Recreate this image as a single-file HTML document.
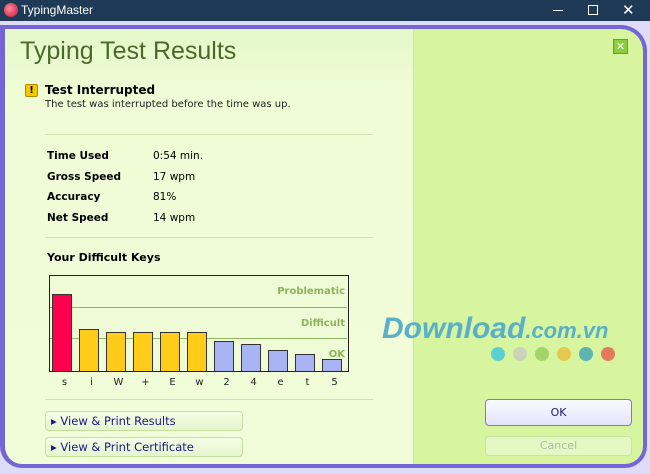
<!DOCTYPE html>
<html><head><meta charset="utf-8"><style>
*{margin:0;padding:0;box-sizing:border-box}
body{width:650px;height:474px;background:#dedcf6;position:relative;overflow:hidden;font-family:Tahoma,"DejaVu Sans","Liberation Sans",sans-serif}
.tb{position:absolute;left:0;top:0;width:650px;height:21px;background:#1f3a56;color:#fff;font-size:12px}
.frame{position:absolute;left:0;top:25px;width:647px;height:443px;border:4px solid #7566d6;border-left-width:5px;border-radius:0 26px 22px 22px;background:#d6f59e;overflow:hidden}
.left{position:absolute;left:0;top:0;width:409px;height:100%;background:linear-gradient(#e4f8c8,#effcd6 60px,#f0fdd8);border-right:1px solid #c6e89a}
.abs{position:absolute}
.b{font-weight:bold}
.hr{position:absolute;height:1px;background:#cfe3b0}
.bar{position:absolute;bottom:0;width:20px;border:1.5px solid #333;border-bottom:none}
.btn{position:absolute;border:1px solid #c5df9d;border-radius:4px;background:linear-gradient(#f4fde6,#e6f6ce);color:#1a1a8a;font-size:11.5px;padding-left:5px;line-height:18px}
</style></head><body>
<div class="tb">
<div class="abs" style="left:4px;top:3px;width:14px;height:14px;border-radius:50%;background:radial-gradient(circle at 40% 40%,#ff8a9a,#c8103a)"></div>
<div class="abs" style="left:21px;top:3px;font-family:'Liberation Sans',sans-serif">TypingMaster</div>
<div class="abs" style="left:553px;top:10px;width:10px;height:1px;background:#fff"></div>
<div class="abs" style="left:588px;top:5px;width:10px;height:10px;border:1px solid #fff"></div>
<div class="abs" style="left:622px;top:1px;font-size:15px;font-family:'Liberation Sans',sans-serif">✕</div>
</div>
<div class="frame">
<div class="left"></div>
<div class="abs" style="left:15px;top:8px;font-size:25px;color:#4a6a2a;font-family:'Liberation Sans',sans-serif">Typing Test Results</div>
<div class="abs" style="left:20px;top:55px;width:13px;height:13px;background:#f6c800;border:1px solid #b08a00;border-radius:2px;font-size:10px;font-weight:bold;text-align:center;line-height:11px">!</div>
<div class="abs b" style="left:40px;top:54px;font-size:12px;color:#000">Test Interrupted</div>
<div class="abs" style="left:40px;top:70px;font-size:10px;color:#222">The test was interrupted before the time was up.</div>
<div class="hr" style="left:40px;top:105px;width:328px"></div>
<div class="abs b" style="left:42px;top:117px;font-size:10.5px;line-height:20.5px">Time Used<br>Gross Speed<br>Accuracy<br>Net Speed</div>
<div class="abs" style="left:148px;top:117px;font-size:10.5px;line-height:20.5px">0:54 min.<br>17 wpm<br>81%<br>14 wpm</div>
<div class="hr" style="left:40px;top:208px;width:328px"></div>
<div class="abs b" style="left:42px;top:222px;font-size:11px">Your Difficult Keys</div>
<div class="abs" style="left:44px;top:246px;width:300px;height:97px;border:1.5px solid #222;background:#eefbd6">
<div class="hr" style="left:0;top:31px;width:297px;background:#8fb860"></div>
<div class="hr" style="left:0;top:62px;width:297px;background:#8fb860"></div>
<div class="abs b" style="right:3px;top:10px;font-size:10px;color:#8db45a">Problematic</div>
<div class="abs b" style="right:3px;top:42px;font-size:10px;color:#8db45a">Difficult</div>
<div class="abs b" style="right:3px;top:73px;font-size:10px;color:#8db45a">OK</div>
<div class="bar" style="left:2px;height:77px;background:#ff0050"></div>
<div class="bar" style="left:29px;height:42px;background:#ffcc1a"></div>
<div class="bar" style="left:56px;height:39px;background:#ffcc1a"></div>
<div class="bar" style="left:83px;height:39px;background:#ffcc1a"></div>
<div class="bar" style="left:110px;height:39px;background:#ffcc1a"></div>
<div class="bar" style="left:137px;height:39px;background:#ffcc1a"></div>
<div class="bar" style="left:164px;height:30px;background:#a8b4f4"></div>
<div class="bar" style="left:191px;height:27px;background:#a8b4f4"></div>
<div class="bar" style="left:218px;height:21px;background:#a8b4f4"></div>
<div class="bar" style="left:245px;height:17px;background:#a8b4f4"></div>
<div class="bar" style="left:272px;height:12px;background:#a8b4f4"></div>
</div>
<div class="abs" style="left:46px;top:348px;width:300px;font-size:10px;color:#222;display:flex">
<span style="width:27px;text-align:center">s</span><span style="width:27px;text-align:center">i</span><span style="width:27px;text-align:center">W</span><span style="width:27px;text-align:center">+</span><span style="width:27px;text-align:center">E</span><span style="width:27px;text-align:center">w</span><span style="width:27px;text-align:center">2</span><span style="width:27px;text-align:center">4</span><span style="width:27px;text-align:center">e</span><span style="width:27px;text-align:center">t</span><span style="width:27px;text-align:center">5</span></div>
<div class="hr" style="left:40px;top:370px;width:328px"></div>
<div class="btn" style="left:40px;top:382px;width:198px;height:20px">▸ View &amp; Print Results</div>
<div class="btn" style="left:40px;top:408px;width:198px;height:20px">▸ View &amp; Print Certificate</div>
<div class="abs" style="left:608px;top:10px;width:15px;height:15px;background:#8ccc40;border:1px solid #6a9a3a;color:#fff;font-size:11px;font-weight:bold;text-align:center;line-height:13px">✕</div>
<div class="abs" style="left:377px;top:283px;font-size:30px;font-weight:bold;font-style:italic;color:#5ab0c8;font-family:'Liberation Sans',sans-serif;letter-spacing:0px;white-space:nowrap">Download<span style="font-size:22px">.com.vn</span></div>
<div class="abs" style="left:486px;top:318px;display:flex;gap:8px">
<i style="width:14px;height:14px;border-radius:50%;background:#5ccfd0"></i><i style="width:14px;height:14px;border-radius:50%;background:#c8d4b8"></i><i style="width:14px;height:14px;border-radius:50%;background:#a4d468"></i><i style="width:14px;height:14px;border-radius:50%;background:#e8c850"></i><i style="width:14px;height:14px;border-radius:50%;background:#5eb4b0"></i><i style="width:14px;height:14px;border-radius:50%;background:#e47a5c"></i></div>
<div class="abs" style="left:480px;top:370px;width:147px;height:27px;border:1px solid #8078c8;border-radius:4px;background:linear-gradient(#fafaff,#e4e4fa);font-size:11px;color:#1a1a70;text-align:center;line-height:25px">OK</div>
<div class="abs" style="left:480px;top:407px;width:147px;height:20px;border:1px solid #c8e4a0;border-radius:4px;background:#e4f8c4;font-size:11px;color:#b0b8a8;text-align:center;line-height:18px">Cancel</div>
</div>
</body></html>
